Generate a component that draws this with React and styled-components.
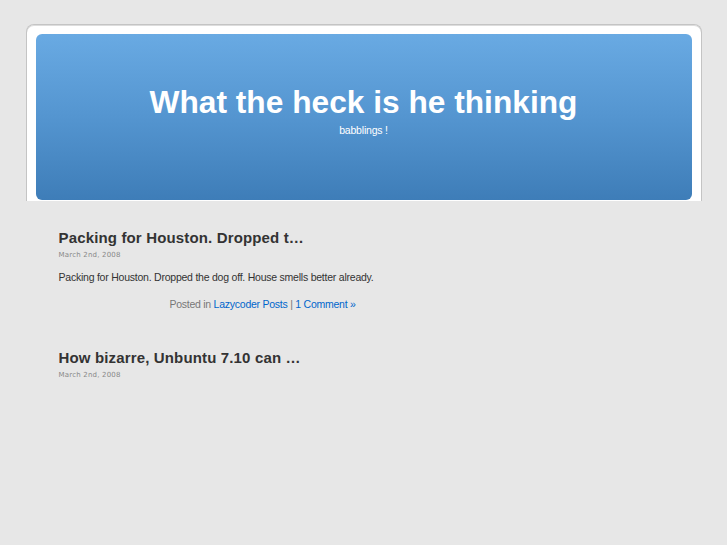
import React from 'react'
import styled, { createGlobalStyle } from 'styled-components'

const Global = createGlobalStyle`
  html, body {
    margin: 0;
    padding: 0;
    background: #e7e7e7;
  }
  body {
    font-family: "Liberation Sans", Arial, sans-serif;
    color: #333;
  }
`

const Page = styled.div`
  width: 676px;
  margin: 24px auto 0;
`

const Frame = styled.div`
  background: #fff;
  border: 1px solid #c4c4c4;
  border-bottom: none;
  border-radius: 8px 8px 0 0;
  padding: 9px 9px 1px;
  box-shadow: inset 0 1px 0 #ddd;
`

const Header = styled.header`
  height: 166px;
  border-radius: 6px;
  background: linear-gradient(to bottom, #69aae3 0%, #5495d0 50%, #3e7db8 100%);
  display: flex;
  flex-direction: column;
  align-items: center;
  color: #fff;
  padding-top: 49px;
  box-sizing: border-box;
`

const Title = styled.h1`
  margin: 0;
  font-size: 31.7px;
  font-weight: bold;
  line-height: 38px;
`

const Tagline = styled.div`
  margin-top: 3px;
  font-size: 10.5px;
  letter-spacing: -0.2px;
`

const Content = styled.main`
  width: 408px;
  padding: 27px 0 0 33px;
`

const Post = styled.article`
  margin-bottom: 38px;
`

const PostTitle = styled.h2`
  margin: 0;
  font-size: 15px;
  font-weight: bold;
  line-height: 20px;
  color: #333;
  letter-spacing: 0.15px;
`

const Date = styled.small`
  display: block;
  margin-top: 3px;
  font-family: "DejaVu Sans", sans-serif;
  font-size: 7px;
  font-weight: normal;
  color: #888;
  letter-spacing: 0.2px;
`

const Entry = styled.p`
  margin: 12px 0 0;
  font-size: 10.5px;
  letter-spacing: -0.23px;
  color: #333;
`

const Meta = styled.p`
  margin: 15px 0 0;
  text-align: center;
  font-size: 10.5px;
  letter-spacing: -0.25px;
  color: #777;
`

const Link = styled.a`
  color: #06c;
  text-decoration: none;
`

export default function App() {
  return (
    <>
      <Global />
      <Page>
        <Frame>
          <Header>
            <Title>What the heck is he thinking</Title>
            <Tagline>babblings !</Tagline>
          </Header>
        </Frame>
        <Content>
          <Post>
            <PostTitle>Packing for Houston. Dropped t…</PostTitle>
            <Date>March 2nd, 2008</Date>
            <Entry>Packing for Houston. Dropped the dog off. House smells better already.</Entry>
            <Meta>
              Posted in <Link href="#">Lazycoder Posts</Link> | <Link href="#">1 Comment »</Link>
            </Meta>
          </Post>
          <Post>
            <PostTitle>How bizarre, Unbuntu 7.10 can …</PostTitle>
            <Date>March 2nd, 2008</Date>
          </Post>
        </Content>
      </Page>
    </>
  )
}
